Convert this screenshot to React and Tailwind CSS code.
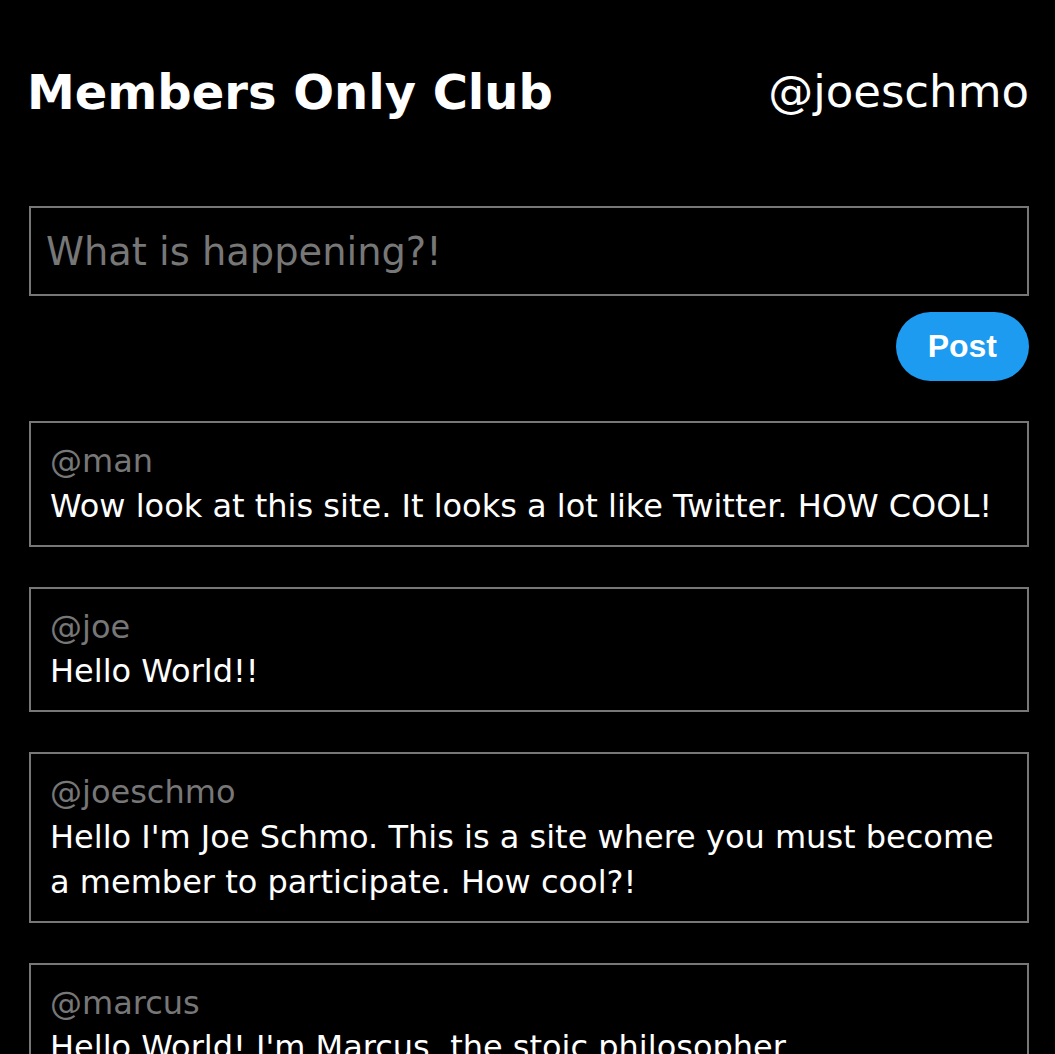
import React from "react";

const posts = [
  { user: "@man", text: "Wow look at this site. It looks a lot like Twitter. HOW COOL!" },
  { user: "@joe", text: "Hello World!!" },
  { user: "@joeschmo", text: "Hello I'm Joe Schmo. This is a site where you must become a member to participate. How cool?!" },
  { user: "@marcus", text: "Hello World! I'm Marcus, the stoic philosopher." },
];

export default function App() {
  return (
    <div className="min-h-screen bg-black text-white pl-[29px] pr-[26px] pt-[36px] pb-10 font-['DejaVu_Sans',sans-serif]">
      <header className="flex h-[112px] items-center justify-between">
        <h1 className="-ml-[2px] text-[48px] font-bold leading-[56px]">Members Only Club</h1>
        <div className="text-[45px] leading-[52px]">@joeschmo</div>
      </header>

      <div className="mt-[58px] flex flex-col">
        <input
          type="text"
          placeholder="What is happening?!"
          className="h-[90px] w-full border-2 border-[#777] bg-black pl-[15px] pr-4 text-[38.4px] text-white placeholder:text-[#777] outline-none font-['DejaVu_Sans',sans-serif]"
        />
        <div className="mt-4 flex justify-end">
          <button className="rounded-full bg-[#1d9bf0] px-8 py-4 text-[32px] font-bold leading-[37px] text-white font-['Liberation_Sans',Arial,sans-serif]">
            Post
          </button>
        </div>
      </div>

      <div className="mt-10 flex flex-col gap-10">
        {posts.map((p) => (
          <div key={p.user} className="border-2 border-[#777] pl-[19px] pr-5 py-4 text-[32px] leading-[1.4]">
            <div className="text-[#777]">{p.user}</div>
            <div className="text-white">{p.text}</div>
          </div>
        ))}
      </div>
    </div>
  );
}
